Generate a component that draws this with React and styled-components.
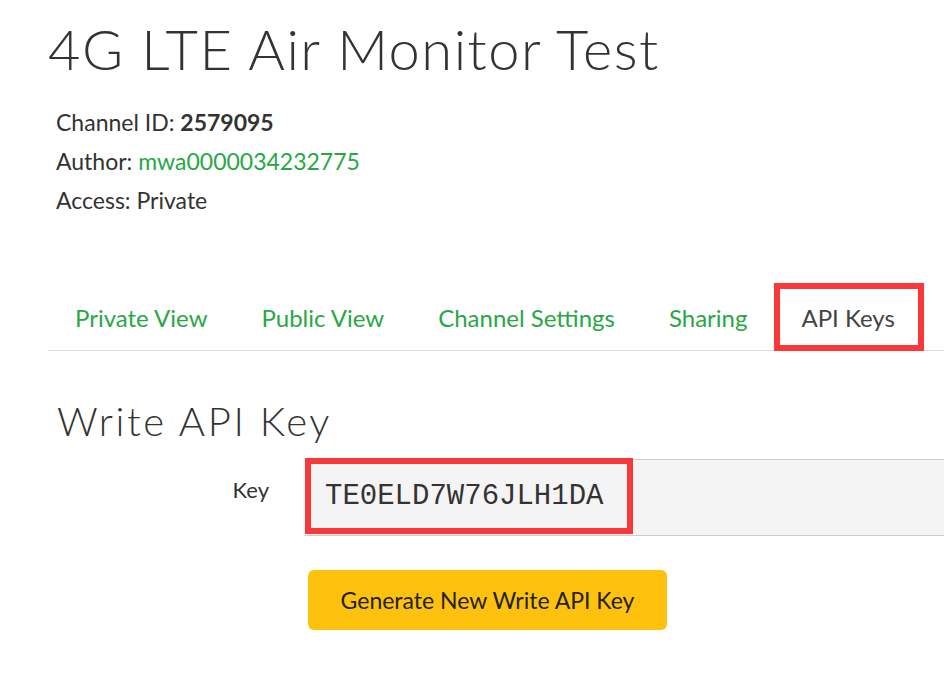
import styled, { createGlobalStyle } from "styled-components";

const GREEN = "#28a745";
const RED = "#fb3839";
const TEXT = "#333333";

const GlobalStyle = createGlobalStyle`
  body {
    margin: 0;
    background: #ffffff;
    color: ${TEXT};
    font-family: "Lato", "Liberation Sans", sans-serif;
  }
`;

const tabs = ["Private View", "Public View", "Channel Settings", "Sharing", "API Keys"];

export default function App() {
  return (
    <Page>
      <GlobalStyle />
      <Title>4G LTE Air Monitor Test</Title>
      <Meta>
        <MetaLine>
          Channel ID: <strong>2579095</strong>
        </MetaLine>
        <MetaLine>
          Author: <AuthorLink>mwa0000034232775</AuthorLink>
        </MetaLine>
        <MetaLine>Access: Private</MetaLine>
      </Meta>

      <TabBar>
        {tabs.map((tab) => (
          <Tab key={tab} active={tab === "API Keys"}>
            {tab}
          </Tab>
        ))}
      </TabBar>

      <SectionTitle>Write API Key</SectionTitle>
      <FormRow>
        <Label>Key</Label>
        <KeyField>
          <KeyValue>TE0ELD7W76JLH1DA</KeyValue>
        </KeyField>
      </FormRow>
      <ButtonRow>
        <GenerateButton>Generate New Write API Key</GenerateButton>
      </ButtonRow>
    </Page>
  );
}

const Page = styled.div`
  width: 944px;
  height: 674px;
  overflow: hidden;
  padding-left: 48px;
  box-sizing: border-box;
`;

const Title = styled.h1`
  margin: 0;
  padding-top: 19px;
  font-size: 56px;
  line-height: 60px;
  font-weight: 300;
  letter-spacing: 1.5px;
  color: ${TEXT};
  white-space: nowrap;
`;

const Meta = styled.div`
  margin-top: 24px;
  padding-left: 8px;
`;

const MetaLine = styled.div`
  font-size: 23px;
  line-height: 39px;

  strong {
    font-weight: 700;
  }
`;

const AuthorLink = styled.span`
  color: ${GREEN};
`;

const TabBar = styled.div`
  display: flex;
  margin-top: 63px;
  border-bottom: 1px solid #dddddd;
  width: 900px;
`;

const Tab = styled.div`
  height: 68px;
  display: flex;
  align-items: center;
  box-sizing: border-box;
  font-size: 24px;
  color: ${({ active }) => (active ? "#444444" : GREEN)};
  border: ${({ active }) => (active ? `6px solid ${RED}` : "none")};
  margin-bottom: -1px;
  padding: ${({ active }) => (active ? "0 23px 0 21px" : "0 27px")};
  white-space: nowrap;
`;

const SectionTitle = styled.h2`
  margin: 46px 0 0 9px;
  font-size: 40px;
  line-height: 48px;
  font-weight: 300;
  letter-spacing: 2.6px;
  color: ${TEXT};
`;

const FormRow = styled.div`
  display: flex;
  align-items: flex-start;
  margin-top: 14px;
`;

const Label = styled.div`
  width: 221px;
  text-align: right;
  font-size: 22px;
  line-height: 26px;
  padding-top: 18px;
`;

const KeyField = styled.div`
  margin-left: 36px;
  flex: 1;
  height: 77px;
  background: #f4f4f4;
  border-top: 1px solid #cccccc;
  border-bottom: 1px solid #cccccc;
  box-sizing: border-box;
  display: flex;
  align-items: stretch;
`;

const KeyValue = styled.div`
  width: 328px;
  margin-top: -2px;
  margin-bottom: 1px;
  border: 6px solid ${RED};
  box-sizing: border-box;
  padding-left: 14px;
  display: flex;
  align-items: center;
  font-family: "Liberation Mono", monospace;
  font-size: 29px;
  color: ${TEXT};
`;

const ButtonRow = styled.div`
  padding-left: 260px;
  margin-top: 34px;
`;

const GenerateButton = styled.button`
  width: 359px;
  height: 60px;
  border: none;
  border-radius: 6px;
  background: #fdc10e;
  color: #222222;
  font-family: "Lato", "Liberation Sans", sans-serif;
  font-size: 23px;
  padding: 0;
`;
